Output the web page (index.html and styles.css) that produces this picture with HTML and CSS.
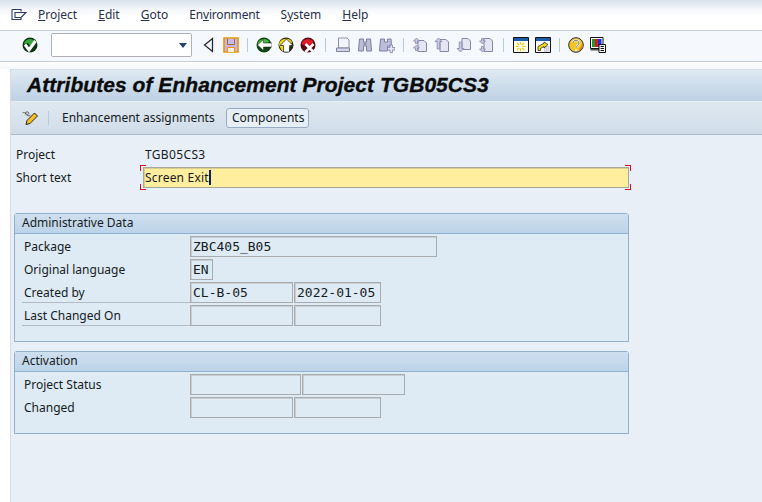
FILE: index.html
```html
<!DOCTYPE html>
<html lang="en">
<head>
<meta charset="utf-8">
<title>Attributes of Enhancement Project</title>
<link rel="stylesheet" href="styles.css">
</head>
<body>
<header class="menubar">
  <svg class="menu-icon" width="16" height="13" viewBox="0 0 16 13"><path d="M1 1.500h9v2M1 1.500v10h9v-2M4 4.500h11l-2.500 2.500-2.500 2.500H4z" fill="#fff" stroke="#2d3a66" stroke-width="1.100"/></svg>
  <nav class="menu">
    <span><u>P</u>roject</span>
    <span><u>E</u>dit</span>
    <span><u>G</u>oto</span>
    <span class="tight">En<u>v</u>ironment</span>
    <span>S<u>y</u>stem</span>
    <span><u>H</u>elp</span>
  </nav>
</header>
<div class="toolbar">
  <svg class="ico" viewBox="0 0 16 16"><circle cx="8" cy="8" r="7.500" fill="#0f3414"/><path d="M2 7a6 5.500 0 0 1 11-2.500L8 9 6 6z" fill="#35a838"/><path d="M3 7.500l4 5.500 6.500-9" fill="none" stroke="#fff" stroke-width="3"/></svg>
  <div class="combo"><span class="combo-arrow"></span></div>
  <svg class="ico" viewBox="0 0 16 16"><path d="M11.500 1.500v13L3.500 8z" fill="#f3f4f6" stroke="#1d2430" stroke-width="1.200"/></svg>
  <svg class="ico" viewBox="0 0 16 16"><path d="M1 1h14v14H1z" fill="#c8b4e6" stroke="#e8960c" stroke-width="1.600"/><path d="M4.500 2v5.500h7V2" fill="#cbb8ea" stroke="#9a7420"/><path d="M4.500 15v-4.500h7V15" fill="#f6eeda" stroke="#e8960c"/></svg>
  <i class="sep"></i>
  <svg class="ico" viewBox="0 0 16 16"><circle cx="8" cy="8" r="7.500" fill="#0d4412"/><path d="M1.500 7a6.500 6 0 0 1 12-2L6 7z" fill="#48bc3c"/><path d="M1.500 8L7.500 2.500V6H16v4H7.500v3.500z" fill="#fff" stroke="#1a1a1a" stroke-width=".5"/></svg>
  <svg class="ico" viewBox="0 0 16 16"><circle cx="8" cy="8" r="7.500" fill="#2c2a10"/><path d="M1 8a7 6.500 0 0 1 13-3l-4 9H4z" fill="#f7d818"/><path d="M8.500 2L15 8.500h-3.500V15h-6V8.500H2z" fill="#fff" stroke="#1a1a1a" stroke-width=".7"/></svg>
  <svg class="ico" viewBox="0 0 16 16"><circle cx="8" cy="8" r="7.500" fill="#560c10"/><path d="M1.500 7a6.500 6 0 0 1 12-2L8 10z" fill="#e01c2a"/><path d="M5.500 7l8 8M13.500 7l-8 8" stroke="#fff" stroke-width="2.500"/></svg>
  <i class="sep wide"></i>
  <svg class="ico" viewBox="0 0 16 16"><path d="M3.500 1H12l2 2v8H3.500z" fill="#f4f5fa" stroke="#8d8fb0"/><path d="M1.500 11h13v3.500h-13z" fill="#d2d3e6" stroke="#7e80a4"/></svg>
  <svg class="ico" viewBox="0 0 16 16"><path d="M2.500 2h4v3h3V2h4l1 12H9.500V9h-3v5H1.500z" fill="#bdbdd8" stroke="#7c7ea4"/><path d="M6.500 6h3v2h-3z" fill="#8e90b4"/></svg>
  <svg class="ico" viewBox="0 0 16 16"><path d="M1.500 2h4v3h3V2h3.500l.5 7H8.500v5H.5z" fill="#bdbdd8" stroke="#7c7ea4"/><path d="M11 8h2.500v2.500H16V13h-2.500v2.500H11V13H8.500v-2.500H11z" fill="#e4e4f2" stroke="#7c7ea4" stroke-width=".8"/></svg>
  <i class="sep"></i>
  <svg class="ico" viewBox="0 0 16 16"><path d="M6 3.500h6l2.500 2.500v8.500H6z" fill="#e6e6f2" stroke="#8486ac"/><path d="M4.500 1L1.500 4h2v2.500h2V4h2zM4.500 8l-3 3h2v2.500h2V11h2z" fill="#c9cae0" stroke="#7c7ea4" stroke-width=".7"/></svg>
  <svg class="ico" viewBox="0 0 16 16"><path d="M6 2.500h6l2.500 2.500v9.500H6z" fill="#e6e6f2" stroke="#8486ac"/><path d="M4.500 1L1 4.500h2.200V12h2.600V4.500H8z" fill="#c9cae0" stroke="#7c7ea4" stroke-width=".7"/></svg>
  <svg class="ico" viewBox="0 0 16 16"><path d="M6 1.500h6l2.500 2.500v8.500H6z" fill="#e6e6f2" stroke="#8486ac"/><path d="M4.500 15L1 11.500h2.200V5h2.600v6.500H8z" fill="#c9cae0" stroke="#7c7ea4" stroke-width=".7"/></svg>
  <svg class="ico" viewBox="0 0 16 16"><path d="M6 1.500h6l2.500 2.500v10.500H6z" fill="#e6e6f2" stroke="#8486ac"/><path d="M4.500 7l-3-3h2V1.500h2V4h2zM4.500 15l-3-3h2V9.500h2V12h2z" fill="#c9cae0" stroke="#7c7ea4" stroke-width=".7"/></svg>
  <i class="sep wide"></i>
  <svg class="ico" viewBox="0 0 16 16"><path d="M.5.500h15v15H.5z" fill="#fffff0" stroke="#111"/><path d="M1 1h14v3H1z" fill="#1d5cab"/><path d="M7.500 5v2.500M7.500 11.500V14M2.500 9.500h3M9.500 9.500h3M4 6l2.200 2.200M11 6L8.800 8.200M4 13l2.200-2.200M11 13l-2.200-2.200" stroke="#e0cc00" stroke-width="1.100"/></svg>
  <svg class="ico" viewBox="0 0 16 16"><path d="M.5.500h15v15H.5z" fill="#fff" stroke="#111"/><path d="M1 1h14v3H1z" fill="#1d5cab"/><path d="M9 9h5.500v6H9z" fill="#d4d4e2"/><path d="M3 13.500V9.500L9 6.200V5l4 2.500L9 11V9.500L5.500 11.500v2z" fill="#f2dc18" stroke="#111" stroke-width=".7"/></svg>
  <i class="sep"></i>
  <svg class="ico" viewBox="0 0 16 16"><circle cx="8" cy="8" r="7.300" fill="#f7c41a" stroke="#1c2a5a" stroke-width="1"/><path d="M11 12a7 7 0 0 0 3-5l1 2a7 7 0 0 1-4 5z" fill="#e87a10"/><path d="M5 6a3 2.700 0 1 1 4.500 2.400C8.500 9 8 9.500 8 11" fill="none" stroke="#fff" stroke-width="2"/><path d="M5 6a3 2.700 0 1 1 4.500 2.400C8.500 9 8 9.500 8 11" fill="none" stroke="#222" stroke-width=".6"/><path d="M7 12h2v2H7z" fill="#fff"/></svg>
  <svg class="ico" viewBox="0 0 16 16"><path d="M.5.500h12.500v11H.5z" fill="#fff" stroke="#111"/><path d="M2 2h3v8H2z" fill="#1a9a30"/><path d="M5 2h3v8H5z" fill="#e01818"/><path d="M8 2h3.500v8H8z" fill="#1c2ee0"/><path d="M.5 12h9v1.500h-9z" fill="#555"/><path d="M9 7.500h6.500v8H9z" fill="#fff" stroke="#111"/><path d="M10.500 9.500h3.500M10.500 11.500h3.500M10.500 13.500h3.500" stroke="#111"/></svg>
</div>
<div class="spacer"></div>
<main class="panel">
  <h1 class="title">Attributes of Enhancement Project TGB05CS3</h1>
  <div class="app-toolbar">
    <svg class="ico" viewBox="0 0 16 16"><path d="M4 14.500l1-4 7.500-7.500 3 3L8 13.500z" fill="#f5c020" stroke="#111" stroke-width=".9"/><path d="M.5 3C3 1 5 6 6.500 4S4 1 3.500 3 7 7 8.500 5" fill="none" stroke="#555" stroke-width=".9"/></svg>
    <i class="sep app-sep"></i>
    <span class="app-action">Enhancement assignments</span>
    <span class="btn">Components</span>
  </div>
  <section class="content">
    <div class="form">
      <span class="form-label">Project</span>
      <span class="form-value">TGB05CS3</span>
      <span class="form-label">Short text</span>
      <div class="req">
        <div class="input">Screen Exit<i class="caret"></i></div>
      </div>
    </div>
    <section class="group first">
      <h2 class="group-head">Administrative Data</h2>
      <div class="group-body">
        <div class="row"><span class="lbl">Package</span><div class="fields"><span class="field w247">ZBC405_B05</span></div></div>
        <div class="row"><span class="lbl">Original language</span><div class="fields"><span class="field w23">EN</span></div></div>
        <div class="row"><span class="lbl line">Created by</span><div class="fields"><span class="field w103">CL-B-05</span><span class="field w87">2022-01-05</span></div></div>
        <div class="row"><span class="lbl line">Last Changed On</span><div class="fields"><span class="field w103"></span><span class="field w87"></span></div></div>
      </div>
    </section>
    <section class="group">
      <h2 class="group-head">Activation</h2>
      <div class="group-body">
        <div class="row"><span class="lbl">Project Status</span><div class="fields"><span class="field w111"></span><span class="field w103"></span></div></div>
        <div class="row"><span class="lbl">Changed</span><div class="fields"><span class="field w103"></span><span class="field w87"></span></div></div>
      </div>
    </section>
  </section>
</main>
</body>
</html>
```
FILE: styles.css
```css
* { box-sizing: border-box; }
html, body { margin: 0; padding: 0; }
body {
  width: 762px;
  height: 502px;
  overflow: hidden;
  display: flex;
  flex-direction: column;
  background: #fff;
  color: #151b22;
  font: 12px/16px "Noto Sans", sans-serif;
}
.menubar {
  height: 31px;
  flex: none;
  display: flex;
  align-items: center;
  padding: 0 0 1px 11px;
  border-bottom: 1px solid #c6ced9;
  background: linear-gradient(#d9e1eb 0, #f6f8fb 10px, #fff 16px);
}
.menu-icon { flex: none; }
.menu { display: flex; gap: 21px; margin-left: 11px; color: #27304a; }
.tight { letter-spacing: -.2px; }
.toolbar {
  height: 31px;
  flex: none;
  display: flex;
  align-items: center;
  gap: 6px;
  padding: 0 0 2px 22px;
  border-bottom: 1px solid #c6ced9;
  background: #f5f8fc;
}
.ico { width: 16px; height: 16px; flex: none; display: block; }
.sep { width: 1px; height: 14px; margin: 0 2px; background: #b4cbe2; flex: none; }
.sep.wide { margin: 0 3px; }
.combo {
  position: relative;
  width: 141px;
  height: 24px;
  margin: 0 3px 0 7px;
  flex: none;
  background: #fff;
  border: 1px solid #aeb2b8;
  border-radius: 2px;
}
.combo-arrow {
  position: absolute;
  right: 4px;
  top: 9px;
  border-style: solid;
  border-width: 5px 4px 0;
  border-color: #25407a transparent transparent;
}
.spacer { height: 7px; flex: none; background: linear-gradient(#fff, #f4f6f9); }
.panel {
  flex: 1;
  margin-left: 10px;
  border-left: 1px solid #d5dde7;
  border-top: 1px solid #d5dde7;
  background: #e8eff7;
  display: flex;
  flex-direction: column;
}
.title {
  margin: 0;
  height: 31px;
  padding-left: 16px;
  font: italic bold 21px/30px "Liberation Sans", sans-serif;
  letter-spacing: .05px;
  -webkit-text-stroke: .35px #0b0b0b;
  color: #0b0b0b;
  background: linear-gradient(#dfe9f2, #bdd1e4);
}
.app-toolbar {
  height: 34px;
  display: flex;
  align-items: center;
  padding-left: 11px;
  border-top: 1px solid #e6edf4;
  border-bottom: 1px solid #a9bbce;
  background: linear-gradient(#dfe8f0, #d0dde9);
}
.app-sep { margin: 0 13px 0 10px; height: 14px; }
.app-action { width: 164px; }
.btn {
  width: 83px;
  height: 20px;
  padding-left: 5px;
  line-height: 18px;
  border: 1px solid #98adc4;
  border-radius: 3px;
  background: #e6eef6;
  white-space: nowrap;
}
.content { padding: 9px 0 0 3px; }
.form {
  display: grid;
  grid-template-columns: 127px 1fr;
  grid-auto-rows: 23px;
  align-items: start;
  padding-left: 2px;
}
.form-label { line-height: 21px; }
.form-value { line-height: 21px; padding-left: 2px; letter-spacing: .35px; }
.req {
  position: relative;
  width: 486px;
}
.req::before, .req::after {
  content: "";
  position: absolute;
  top: -2px;
  height: 25px;
  width: 6px;
  background:
    linear-gradient(#d8101c, #d8101c) 0 0 / 100% 1px no-repeat,
    linear-gradient(#d8101c, #d8101c) 0 100% / 100% 1px no-repeat,
    linear-gradient(#d8101c, #d8101c) 0 0 / 1px 6px no-repeat,
    linear-gradient(#d8101c, #d8101c) 0 100% / 1px 6px no-repeat;
}
.req::before { left: -3px; }
.req::after { right: -2px; transform: scaleX(-1); }
.input {
  height: 21px;
  padding-left: 1px;
  line-height: 19px;
  letter-spacing: .2px;
  background: #ffee9e;
  border: 1px solid #a5a69c;
  box-shadow: inset 1px 1px #d9cd90;
  display: flex;
  align-items: center;
}
.caret { width: 2px; height: 15px; background: #0a1f5c; }
.group {
  width: 615px;
  margin-top: 9px;
  border: 1px solid #8fb0cf;
  border-radius: 3px 3px 0 0;
  background: #deeaf4;
}
.group.first { margin-top: 23px; }
.group-head {
  margin: 0;
  height: 20px;
  padding-left: 7px;
  font: 12px/18px "Noto Sans", sans-serif;
  border-bottom: 1px solid #8fb0cf;
  background: linear-gradient(#cfe0ef, #bcd3e8);
}
.group-body { padding: 2px 0 13px 7px; }
.row { display: flex; height: 23px; align-items: flex-start; }
.lbl { width: 168px; height: 21px; padding-left: 2px; line-height: 21px; flex: none; }
.lbl.line { border-bottom: 1px solid #b3bcc4; }
.fields { display: flex; gap: 1px; }
.field {
  height: 21px;
  padding-left: 2px;
  font: 13px/19px "DejaVu Sans Mono", monospace;
  border: 1px solid #a8acae;
  box-shadow: inset 1px 1px #c9ced2;
  white-space: pre;
}
.w247 { width: 247px; }
.w23 { width: 23px; }
.w103 { width: 103px; }
.w87 { width: 87px; }
.w111 { width: 111px; }
```
